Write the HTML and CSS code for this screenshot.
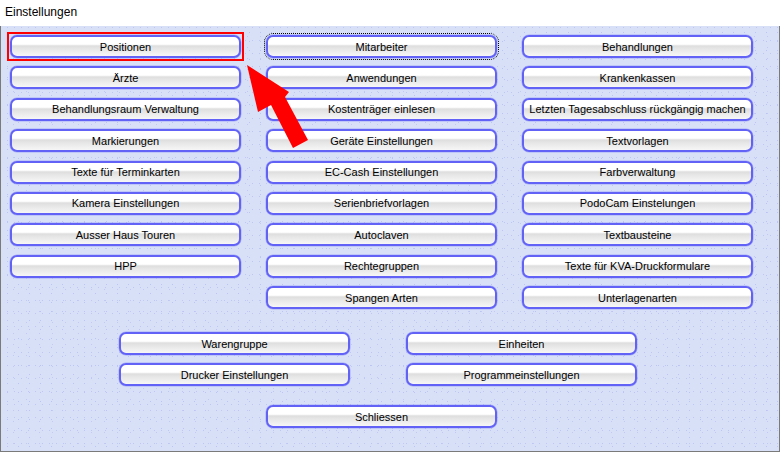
FILE: index.html
```html
<!DOCTYPE html>
<html>
<head>
<meta charset="utf-8">
<link rel="stylesheet" href="styles.css">
</head>
<body>
<div class="window">
  <div class="titlebar">Einstellungen</div>
  <div class="panel">
    <div class="grid">
      <div class="col">
        <button class="btn marked">Positionen</button>
        <button class="btn">Ärzte</button>
        <button class="btn">Behandlungsraum Verwaltung</button>
        <button class="btn">Markierungen</button>
        <button class="btn">Texte für Terminkarten</button>
        <button class="btn">Kamera Einstellungen</button>
        <button class="btn">Ausser Haus Touren</button>
        <button class="btn">HPP</button>
      </div>
      <div class="col">
        <button class="btn focused">Mitarbeiter</button>
        <button class="btn">Anwendungen</button>
        <button class="btn">Kostenträger einlesen</button>
        <button class="btn">Geräte Einstellungen</button>
        <button class="btn">EC-Cash Einstellungen</button>
        <button class="btn">Serienbriefvorlagen</button>
        <button class="btn">Autoclaven</button>
        <button class="btn">Rechtegruppen</button>
        <button class="btn">Spangen Arten</button>
      </div>
      <div class="col">
        <button class="btn">Behandlungen</button>
        <button class="btn">Krankenkassen</button>
        <button class="btn">Letzten Tagesabschluss rückgängig machen</button>
        <button class="btn">Textvorlagen</button>
        <button class="btn">Farbverwaltung</button>
        <button class="btn">PodoCam Einstelungen</button>
        <button class="btn">Textbausteine</button>
        <button class="btn">Texte für KVA-Druckformulare</button>
        <button class="btn">Unterlagenarten</button>
      </div>
    </div>
    <div class="lower">
      <button class="btn">Warengruppe</button>
      <button class="btn">Einheiten</button>
      <button class="btn">Drucker Einstellungen</button>
      <button class="btn">Programmeinstellungen</button>
    </div>
    <div class="closerow">
      <button class="btn">Schliessen</button>
    </div>
    <svg class="arrow" width="80" height="100" viewBox="0 0 80 100">
      <polygon points="6,5 48,32 44,37 67,80 52,88 30,45 17,52" fill="#ff0000"/>
    </svg>
  </div>
</div>
</body>
</html>
```

FILE: styles.css
```css
html, body {
  margin: 0;
  padding: 0;
  background: #ffffff;
}
body {
  width: 781px;
  height: 453px;
  overflow: hidden;
  font-family: "Liberation Sans", Arial, sans-serif;
}
.window {
  width: 781px;
}
.titlebar {
  height: 26px;
  line-height: 25px;
  padding-left: 5px;
  font-size: 12px;
  color: #000;
  box-sizing: border-box;
}
.panel {
  position: relative;
  box-sizing: border-box;
  width: 780px;
  height: 426px;
  border-left: 1px solid #7a7a7a;
  border-right: 1px solid #7a7a7a;
  border-bottom: 1px solid #7a7a7a;
  background-color: #d7e0f6;
  background-image:
    radial-gradient(circle, #bcc4f3 0.6px, transparent 0.8px),
    radial-gradient(circle, #c2caf3 0.6px, transparent 0.8px),
    radial-gradient(circle, #bec6f2 0.6px, transparent 0.8px);
  background-size: 11px 9px, 13px 11px, 7px 13px;
  background-position: 1px 2px, 6px 5px, 3px 8px;
  padding-top: 9px;
  padding-left: 9px;
}
.grid {
  display: grid;
  grid-template-columns: 231px 231px 231px;
  column-gap: 25px;
  align-items: start;
}
.col {
  display: flex;
  flex-direction: column;
  gap: 8.4px;
}
.btn {
  position: relative;
  box-sizing: border-box;
  width: 231px;
  height: 23px;
  margin: 0;
  padding: 0 2px;
  border: 2px solid #6262f6;
  border-radius: 7px;
  box-shadow: 0 0 0 0.5px rgba(120,120,255,0.5);
  background: linear-gradient(to bottom, #ffffff 0%, #ffffff 38%, #dedede 47%, #e6e6e6 62%, #eeeeee 80%, #f6f6f6 100%);
  font-family: "Liberation Sans", Arial, sans-serif;
  font-size: 11px;
  color: #000;
  text-align: center;
  line-height: 18px;
  white-space: nowrap;
  cursor: default;
}
.btn.focused {
  outline: 1px dotted #000;
  outline-offset: 1px;
}
.btn.marked::after {
  content: "";
  position: absolute;
  left: -5px;
  top: -5px;
  right: -5px;
  bottom: -5px;
  border: 2px solid #ff0000;
}
.lower {
  display: grid;
  grid-template-columns: 231px 231px;
  column-gap: 56px;
  row-gap: 8px;
  margin-top: 23px;
  margin-left: 109px;
}
.closerow {
  display: flex;
  margin-top: 19px;
  margin-left: 256px;
}
.arrow {
  position: absolute;
  left: 240px;
  top: 34px;
}
```
